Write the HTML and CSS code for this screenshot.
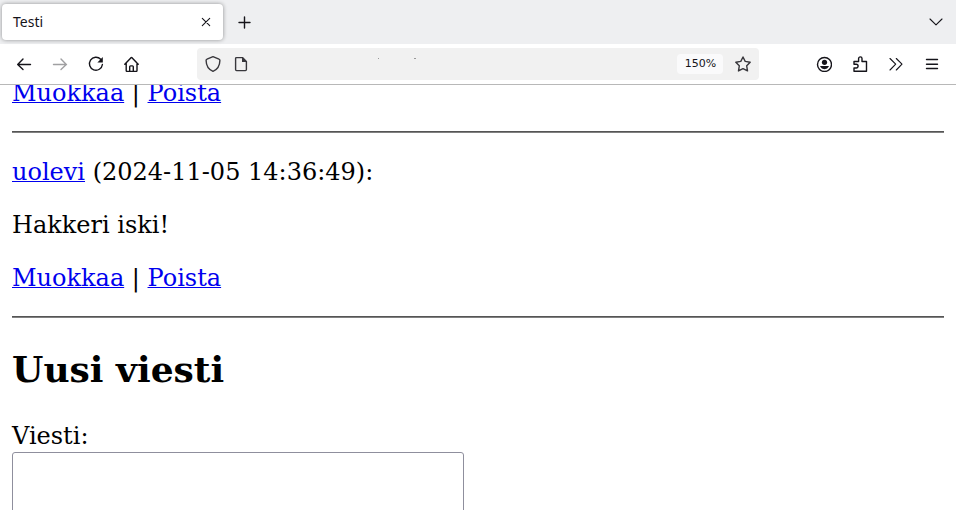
FILE: index.html
```html
<!DOCTYPE html>
<html lang="fi">
<head>
<meta charset="utf-8">
<title>Testi</title>
<link rel="stylesheet" href="styles.css">
</head>
<body>
<header class="browser">
  <div class="tabs">
    <div class="tab">
      <span class="tab-title">Testi</span>
      <button class="tab-close" aria-label="Close tab"><svg class="icon" viewBox="0 0 16 16"><path d="M4.300 4.300l7.400 7.400M11.700 4.300l-7.400 7.400"/></svg></button>
    </div>
    <button class="tool" aria-label="New tab"><svg class="icon bold" viewBox="0 0 16 16"><path d="M8.500 3v11M3 8.500h11"/></svg></button>
    <button class="tool tabs-list" aria-label="List all tabs"><svg class="icon" viewBox="0 0 16 16"><path d="M2 5l6 5.800L14 5"/></svg></button>
  </div>
  <nav class="toolbar">
    <button class="tool" aria-label="Back"><svg class="icon bold" viewBox="0 0 16 16"><path d="M14.500 8.500H2M7 3L1.700 8.500L7 13.500"/></svg></button>
    <button class="tool" aria-label="Forward" disabled><svg class="icon bold" viewBox="0 0 16 16"><path d="M1.500 8.500h13M9 3l5.300 5.500L9 13.500"/></svg></button>
    <button class="tool" aria-label="Reload"><svg class="icon bold" viewBox="0 0 16 16"><path d="M12.700 3.300A6.500 6.500 0 1 0 14.400 8.500"/><path class="solid" d="M14.800 1v5.500H9.400z"/></svg></button>
    <button class="tool" aria-label="Home"><svg class="icon bold" viewBox="0 0 16 16"><path d="M.8 8.300L6.800 1.900Q7.500 1.300 8.200 1.900L14.200 8.300M2.200 7v7.500q0 .9.900.9h9q.9 0 .9-.9V7M5.700 15v-4.200q0-.9.900-.9h1.800q.9 0 .9.900V15"/></svg></button>
    <div class="spacer"></div>
    <div class="address">
      <button class="site" aria-label="Tracking protection"><svg class="icon bold" viewBox="0 0 16 16"><path d="M8 .7L14 3.200Q14.900 3.500 14.900 4.500C14.800 9.500 12.500 13.500 8 15.300C3.500 13.500 1.200 9.500 1.100 4.500Q1.100 3.500 2 3.200z"/></svg></button>
      <button class="site" aria-label="Site information"><svg class="icon bold" viewBox="0 0 16 16"><path d="M9.500 1.600H3.600q-1 0-1 1v11q0 1 1 1h8.800q1 0 1-1V5.500z"/><path class="solid" d="M9 1.200V6h5z"/></svg></button>
      <input class="url" type="text" aria-label="Address">
      <svg class="marks" viewBox="0 0 40 2" aria-hidden="true"><path d="M1 .5h1M37 .5h2"/></svg>
      <button class="zoom">150%</button>
      <button class="site star" aria-label="Bookmark"><svg class="icon bold" viewBox="0 0 16 16"><path d="M8 1L10.200 5.400L15.200 6.200L11.700 9.800L12.500 14.900L8 12.600L3.500 14.900L4.300 9.800L.8 6.200L5.800 5.400z"/></svg></button>
    </div>
    <div class="spacer"></div>
    <button class="tool" aria-label="Account"><svg class="icon bold" viewBox="0 0 16 16"><circle cx="8.500" cy="8.500" r="7"/><circle class="solid" cx="8.500" cy="6.300" r="2.600"/><path class="solid" d="M4.300 10h8.400v.8q-1.200 2.400-4.200 2.400t-4.200-2.400z"/></svg></button>
    <button class="tool" aria-label="Extensions"><svg class="icon bold" viewBox="0 0 16 16"><path d="M2 15.300V12h2.200a1.900 1.900 0 0 0 0-3.800H2V5.500h4.600V2.600a1.700 1.700 0 0 1 3.400 0v2.900h4.500v9.800z"/></svg></button>
    <button class="tool" aria-label="More tools"><svg class="icon" viewBox="0 0 16 16"><path d="M2 2.500l5.700 5.700L2 14M8.300 2.500L14 8.200L8.300 14"/></svg></button>
    <button class="tool" aria-label="Menu"><svg class="icon bold" viewBox="0 0 16 16"><path d="M2.500 3.500h11M2.500 8.200h11M2.500 12.500h11"/></svg></button>
  </nav>
</header>
<main class="page">
  <p class="first"><a href="#">Muokkaa</a> | <a href="#">Poista</a></p>
  <hr>
  <p><a href="#">uolevi</a> (2024-11-05 14:36:49):</p>
  <p>Hakkeri iski!</p>
  <p><a href="#">Muokkaa</a> | <a href="#">Poista</a></p>
  <hr>
  <h2>Uusi viesti</h2>
  <label for="message">Viesti:</label>
  <textarea id="message" rows="5"></textarea>
</main>
</body>
</html>
```
FILE: styles.css
```css
* { box-sizing: border-box; }

body {
  display: flex;
  flex-direction: column;
  height: 100vh;
  margin: 0;
  overflow: hidden;
  background: #fff;
}

button {
  padding: 0;
  border: 0;
  background: none;
  color: #15141a;
}

.browser {
  flex: none;
  border-bottom: 1px solid #b8b8b8;
  font: 14px/20px "Noto Sans", sans-serif;
  color: #15141a;
}

.tabs {
  display: flex;
  align-items: center;
  height: 44px;
  padding: 0 2px;
  background: #eeeff1;
}

.tab {
  display: flex;
  align-items: center;
  justify-content: space-between;
  width: 221px;
  height: 36px;
  margin-right: 3px;
  padding: 0 7px 0 11px;
  border-radius: 4px;
  background: #fff;
  box-shadow: 0 0 4px rgba(0, 0, 0, 0.4);
}

.tab-close {
  display: grid;
  place-items: center;
  width: 20px;
  height: 20px;
}

.tabs-list { margin-left: auto; }

.toolbar {
  display: flex;
  align-items: center;
  height: 40px;
  padding: 0 6px;
}

.tool {
  display: grid;
  place-items: center;
  flex: none;
  width: 36px;
  height: 36px;
}

.tool:disabled { opacity: 0.4; }

.spacer { flex: 1; }

.icon {
  display: block;
  width: 16px;
  height: 16px;
  fill: none;
  stroke: currentColor;
  stroke-width: 1.1;
  stroke-linecap: round;
  stroke-linejoin: round;
}

.bold { stroke-width: 1.4; }

.solid {
  fill: currentColor;
  stroke: none;
}

.address {
  position: relative;
  display: flex;
  align-items: center;
  flex: 12;
  height: 32px;
  padding: 0 2px;
  border-radius: 4px;
  background: #f1f1f1;
}

.site {
  display: grid;
  place-items: center;
  flex: none;
  width: 28px;
  height: 28px;
  color: #38373c;
}

.star { margin-left: 6px; }

.url {
  flex: 1;
  min-width: 0;
  height: 28px;
  padding: 0 4px;
  border: 0;
  outline: 0;
  background: transparent;
  font: inherit;
}

.marks {
  position: absolute;
  top: 10px;
  left: 180px;
  width: 40px;
  height: 2px;
  stroke: #999;
}

.zoom {
  flex: none;
  width: 46px;
  height: 20px;
  border-radius: 4px;
  background: #fafafb;
  font: 11px/20px "DejaVu Sans", sans-serif;
}

.page {
  flex: 1;
  min-height: 0;
  padding: 0 12px;
  overflow: hidden;
  font: 24px/28px "DejaVu Serif", serif;
  color: #000;
}

.page p { margin: 25px 0 24px; }

/* The page is scrolled so its first line sits partly under the toolbar. */
.page .first { margin-top: -6px; }

.page a {
  color: #00e;
  text-decoration-thickness: 1px;
}

.page hr {
  height: 2px;
  margin: 24px 0;
  border: 0;
  border-top: 1px solid #555;
  background: #808080;
}

.page h2 {
  margin: 30px 0 32px;
  font-size: 36px;
  line-height: 42px;
}

.page label { display: block; }

.page textarea {
  display: block;
  width: 452px;
  max-width: 100%;
  height: 120px;
  margin-top: 2px;
  border: 1px solid #8f8f9d;
  border-radius: 3px;
  outline: 0;
  background: #fff;
  font: 20px/24px "DejaVu Sans Mono", monospace;
  resize: none;
}
```
